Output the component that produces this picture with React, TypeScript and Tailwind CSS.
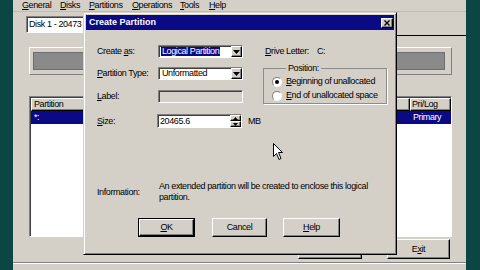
const raised =
  'border border-t-white border-l-white border-r-black border-b-black shadow-[inset_-1px_-1px_0_#808080] bg-[#d4d0c8]';
const sunken =
  'border border-t-[#808080] border-l-[#808080] border-r-white border-b-white shadow-[inset_1px_1px_0_#404040]';

function DownArrow() {
  return (
    <svg width="7" height="4" viewBox="0 0 7 4">
      <polygon points="0,0 7,0 3.5,4" fill="#000" />
    </svg>
  );
}

function Combo({ value, selected }: { value: string; selected?: boolean }) {
  return (
    <div className={`${sunken} bg-white h-[13px] w-[85px] flex items-center`}>
      <span
        className={`ml-[2px] px-[1px] leading-[9px] ${selected ? 'bg-[#0a0a84] text-white' : 'text-black'}`}
      >
        {value}
      </span>
      <div className={`ml-auto ${raised} w-[11px] h-full flex items-center justify-center`}>
        <DownArrow />
      </div>
    </div>
  );
}

function Radio({ checked, children }: { checked?: boolean; children: React.ReactNode }) {
  return (
    <div className="flex items-center h-[11px]">
      <div className="w-[10px] h-[10px] rounded-full border border-t-[#808080] border-l-[#808080] border-r-white border-b-white bg-white flex items-center justify-center">
        {checked && <div className="w-[4px] h-[4px] rounded-full bg-black" />}
      </div>
      <span className="ml-[4px]">{children}</span>
    </div>
  );
}

function Button({ children, width, isDefault }: { children: React.ReactNode; width: string; isDefault?: boolean }) {
  const inner = (
    <div className={`${raised} h-full w-full flex items-center justify-center`}>{children}</div>
  );
  if (isDefault) {
    return <div className={`${width} h-[19px] border border-black`}>{inner}</div>;
  }
  return <div className={`${width} h-[19px]`}>{inner}</div>;
}

function CreatePartition() {
  return (
    <div className="absolute left-[70px] top-[12px] w-[314px] h-[243px] bg-[#d4d0c8] border border-t-[#d4d0c8] border-l-[#d4d0c8] border-r-black border-b-black shadow-[inset_1px_1px_0_#fff,inset_-1px_-1px_0_#808080] p-[2px]">
      {/* title bar */}
      <div className="h-[15px] bg-[#0a0a84] flex items-center pl-[3px] pr-[1px]">
        <span className="text-white font-bold text-[9px] tracking-normal">Create Partition</span>
        <div className={`ml-auto ${raised} w-[12px] h-[10px] flex items-center justify-center`}>
          <svg width="6" height="6" viewBox="0 0 6 6">
            <path d="M0.5 0.5 L5.5 5.5 M5.5 0.5 L0.5 5.5" stroke="#000" strokeWidth="1.4" />
          </svg>
        </div>
      </div>

      <div className="pl-[11px]">
        <div className="flex items-start mt-[15px]">
          {/* left column */}
          <div className="w-[166px] flex flex-col">
            <div className="flex items-center h-[13px]">
              <span className="w-[61px]">
                Create <u>a</u>s:
              </span>
              <Combo value="Logical Partition" selected />
            </div>
            <div className="flex items-center h-[13px] mt-[9px]">
              <span className="w-[61px]">
                <u>P</u>artition Type:
              </span>
              <Combo value="Unformatted" />
            </div>
            <div className="flex items-center h-[13px] mt-[10px]">
              <span className="w-[61px]">
                <u>L</u>abel:
              </span>
              <div className={`${sunken} bg-[#d4d0c8] h-[13px] w-[85px]`} />
            </div>
            <div className="flex items-center h-[14px] mt-[11px]">
              <span className="w-[60px]">
                <u>S</u>ize:
              </span>
              <div className={`${sunken} bg-white h-[14px] w-[85px] flex items-center`}>
                <span className="ml-[2px]">20465.6</span>
                <div className="ml-auto w-[11px] h-full flex flex-col">
                  <div className={`${raised} flex-1 flex items-center justify-center`}>
                    <svg width="5" height="3" viewBox="0 0 5 3">
                      <polygon points="0,3 5,3 2.5,0" fill="#000" />
                    </svg>
                  </div>
                  <div className={`${raised} flex-1 flex items-center justify-center`}>
                    <svg width="5" height="3" viewBox="0 0 5 3">
                      <polygon points="0,0 5,0 2.5,3" fill="#000" />
                    </svg>
                  </div>
                </div>
              </div>
              <span className="ml-[6px]">MB</span>
            </div>
          </div>

          {/* right column */}
          <div className="w-[124px] flex flex-col">
            <div className="flex items-center h-[13px] pl-[2px]">
              <span className="w-[52px]">
                <u>D</u>rive Letter:
              </span>
              <span>C:</span>
            </div>
            <fieldset className="mt-[4px] border border-[#8c8c8c] shadow-[1px_1px_0_#fff] pl-[8px] pb-[2px]">
              <legend className="ml-[14px] px-[2px] leading-[12px]">Position:</legend>
              <div className="mt-[2px]">
                <Radio checked>
                  <u>B</u>eginning of unallocated
                </Radio>
              </div>
              <div className="mt-[3px]">
                <Radio>
                  <u>E</u>nd of unallocated space
                </Radio>
              </div>
            </fieldset>
          </div>
        </div>

        {/* information */}
        <div className="flex items-center mt-[53px]">
          <span className="w-[62px]">Information:</span>
          <p className="w-[214px] leading-[11px]">
            An extended partition will be created to enclose this logical partition.
          </p>
        </div>

        {/* buttons */}
        <div className="flex mt-[15px] ml-[41px]">
          <Button width="w-[57px]" isDefault>
            <u>O</u>K
          </Button>
          <div className="ml-[17px]">
            <Button width="w-[55px]">Cancel</Button>
          </div>
          <div className="ml-[16px]">
            <Button width="w-[57px]">
              <u>H</u>elp
            </Button>
          </div>
        </div>
      </div>

      {/* mouse pointer */}
      <svg className="absolute left-[189px] top-[130px]" width="11" height="18" viewBox="0 0 11 18">
        <path
          d="M0.5 0.5 L0.5 13.5 L3.5 10.5 L6 16.5 L8 15.5 L5.5 9.5 L9.5 9.5 Z"
          fill="#fff"
          stroke="#000"
          strokeWidth="1"
        />
      </svg>
    </div>
  );
}

export default function App() {
  return (
    <div className="w-[480px] h-[270px] flex overflow-hidden font-['Liberation_Sans',Arial,sans-serif] text-[9px] tracking-[-0.4px] leading-[11px] text-black">
      <div className="w-[13px] bg-[#0b4643]" />

      <div className="flex-1 relative bg-[#d4d0c8] flex flex-col">
        {/* menu bar */}
        <div className="h-[12px] flex pl-[9px] leading-[10px] border-b border-[#c0bcb4]">
          <span className="w-[38px]"><u>G</u>eneral</span>
          <span className="w-[29px]"><u>D</u>isks</span>
          <span className="w-[43px]"><u>P</u>artitions</span>
          <span className="w-[48px]"><u>O</u>perations</span>
          <span className="w-[29px]"><u>T</u>ools</span>
          <span><u>H</u>elp</span>
        </div>

        {/* disk selector */}
        <div className={`${sunken} bg-white mt-[4px] ml-[13px] w-[170px] h-[17px] flex items-center`}>
          <span className="ml-[2px]">Disk 1 - 20473 MB</span>
        </div>
        <div className="mt-[2px] ml-[287px] h-px bg-black" />

        {/* disk graphic */}
        <div className="mt-[11px] ml-[16px] w-[423px] h-[28px] border border-t-white border-l-white border-r-[#808080] border-b-[#808080] pt-[4px] pl-[3px] pr-[6px] pb-[4px]">
          <div className="h-full bg-[#8a8a8a] border border-[#6e6e6e]" />
        </div>

        {/* partition list */}
        <div className={`${sunken} bg-white mt-[21px] ml-[16px] w-[423px] h-[141px] flex flex-col`}>
          <div className="flex h-[13px] ml-[1px] mt-[1px]">
            <div className={`${raised} w-[80px] pl-[2px] flex items-center`}>Partition</div>
            <div className={`${raised} flex-1`} />
            <div className={`${raised} w-[41px] pl-[1px] flex items-center`}>Pri/Log</div>
          </div>
          <div className="flex h-[13px] ml-[1px] w-[420px] bg-[#0a0a84] text-white items-center">
            <span className="w-[382px] pl-[3px]">*:</span>
            <span>Primary</span>
          </div>
        </div>

        {/* bottom buttons */}
        <div className="flex mt-[2px] h-[20px]">
          <div className={`${raised} ml-[285px] w-[64px] h-full`} />
          <div className={`${raised} ml-[25px] w-[63px] h-full flex items-center justify-center`}>
            E<u>x</u>it
          </div>
        </div>

        {/* status bar */}
        <div className="mt-[3px] flex-1 border-t border-[#808080] shadow-[inset_0_1px_0_#fff]" />

        <CreatePartition />
      </div>

      <div className="w-[14px] bg-[#0b4643]" />
    </div>
  );
}
